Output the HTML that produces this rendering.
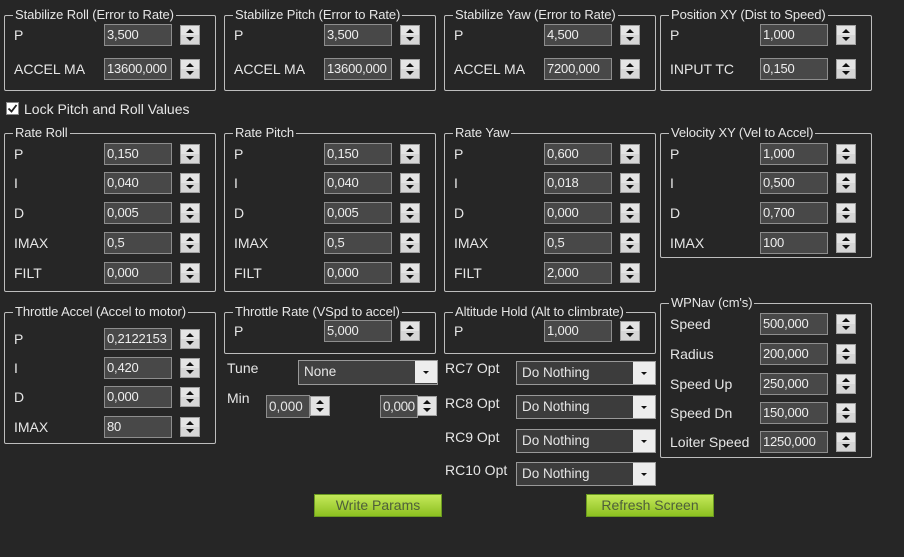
<!DOCTYPE html><html><head><meta charset="utf-8"><style>
*{box-sizing:border-box;margin:0;padding:0}
body{width:904px;height:557px;background:#262626;font-family:"Liberation Sans",sans-serif;font-size:13.5px;color:#e6e6e6;position:relative;overflow:hidden}
.g{position:absolute;border:1px solid #bdbdbd;border-radius:2px}
.g>.t{position:absolute;left:8px;top:-9px;background:#262626;padding:0 2px;font-size:13px;line-height:16px;white-space:nowrap;letter-spacing:-0.1px}
.r{position:absolute;left:0;width:100%;height:22px}
.r span{position:absolute;left:9px;top:3px;line-height:16px;font-size:14px}
.r i{position:absolute;left:99px;top:0;width:68px;height:22px;background:#484848;border:1px solid #8e8e8e;font-style:normal;line-height:20px;padding-left:2px;color:#eee;font-size:13px;letter-spacing:-0.2px;white-space:nowrap;overflow:hidden}
.r b,.sp{position:absolute;left:175px;top:1px;width:20px;height:20px;background:#e4e4e4;border:1px solid #a0a0a0}
.r b:before,.sp:before{content:"";position:absolute;left:5px;top:3px;border:4px solid transparent;border-bottom:4px solid #111;border-top:0}
.r b:after,.sp:after{content:"";position:absolute;left:5px;top:11px;border:4px solid transparent;border-top:4px solid #111;border-bottom:0}
.r b{box-shadow:inset 0 -9px 0 #d6d6d6}
.l{position:absolute;line-height:16px;font-size:14px}
.cb{position:absolute;width:110px;height:24px;background:#3c3c3c;border:1px solid #999;line-height:22px;padding-left:5px}
.cb:after{content:"";position:absolute;right:0;top:0;width:22px;height:22px;background:#ededed}
.cb:before{content:"";position:absolute;right:8px;top:10px;border:3px solid transparent;border-top:3px solid #111;z-index:2}
.btn{position:absolute;width:128px;height:23px;background:linear-gradient(#c4e85a,#8cc020);border:1px solid #6a9a20;color:#4f5f3a;text-align:center;line-height:21px;font-size:14px}
</style></head><body>

<div class="g" style="left:4px;top:15px;width:212px;height:76px"><div class="t">Stabilize Roll (Error to Rate)</div>
<div class="r" style="top:8px"><span>P</span><i>3,500</i><b></b></div>
<div class="r" style="top:42px"><span>ACCEL MA</span><i>13600,000</i><b></b></div></div>
<div class="g" style="left:224px;top:15px;width:212px;height:76px"><div class="t">Stabilize Pitch (Error to Rate)</div>
<div class="r" style="top:8px"><span>P</span><i>3,500</i><b></b></div>
<div class="r" style="top:42px"><span>ACCEL MA</span><i>13600,000</i><b></b></div></div>
<div class="g" style="left:444px;top:15px;width:212px;height:76px"><div class="t">Stabilize Yaw (Error to Rate)</div>
<div class="r" style="top:8px"><span>P</span><i>4,500</i><b></b></div>
<div class="r" style="top:42px"><span>ACCEL MA</span><i>7200,000</i><b></b></div></div>
<div class="g" style="left:660px;top:15px;width:212px;height:76px"><div class="t">Position XY (Dist to Speed)</div>
<div class="r" style="top:8px"><span>P</span><i>1,000</i><b></b></div>
<div class="r" style="top:42px"><span>INPUT TC</span><i>0,150</i><b></b></div></div>

<div style="position:absolute;left:6px;top:102px;width:13px;height:13px;background:#fff;border:1px solid #888"><svg width="11" height="11" style="position:absolute;left:0;top:0"><path d="M1.5 5.5 L4.5 8.5 L9.5 2" stroke="#222" stroke-width="1.8" fill="none"/></svg></div>
<div class="l" style="left:24px;top:101px">Lock Pitch and Roll Values</div>

<div class="g" style="left:4px;top:133px;width:212px;height:159px"><div class="t">Rate Roll</div>
<div class="r" style="top:9px"><span>P</span><i>0,150</i><b></b></div>
<div class="r" style="top:38px"><span>I</span><i>0,040</i><b></b></div>
<div class="r" style="top:68px"><span>D</span><i>0,005</i><b></b></div>
<div class="r" style="top:98px"><span>IMAX</span><i>0,5</i><b></b></div>
<div class="r" style="top:128px"><span>FILT</span><i>0,000</i><b></b></div></div>
<div class="g" style="left:224px;top:133px;width:212px;height:159px"><div class="t">Rate Pitch</div>
<div class="r" style="top:9px"><span>P</span><i>0,150</i><b></b></div>
<div class="r" style="top:38px"><span>I</span><i>0,040</i><b></b></div>
<div class="r" style="top:68px"><span>D</span><i>0,005</i><b></b></div>
<div class="r" style="top:98px"><span>IMAX</span><i>0,5</i><b></b></div>
<div class="r" style="top:128px"><span>FILT</span><i>0,000</i><b></b></div></div>
<div class="g" style="left:444px;top:133px;width:212px;height:159px"><div class="t">Rate Yaw</div>
<div class="r" style="top:9px"><span>P</span><i>0,600</i><b></b></div>
<div class="r" style="top:38px"><span>I</span><i>0,018</i><b></b></div>
<div class="r" style="top:68px"><span>D</span><i>0,000</i><b></b></div>
<div class="r" style="top:98px"><span>IMAX</span><i>0,5</i><b></b></div>
<div class="r" style="top:128px"><span>FILT</span><i>2,000</i><b></b></div></div>
<div class="g" style="left:660px;top:133px;width:212px;height:125px"><div class="t">Velocity XY (Vel to Accel)</div>
<div class="r" style="top:9px"><span>P</span><i>1,000</i><b></b></div>
<div class="r" style="top:38px"><span>I</span><i>0,500</i><b></b></div>
<div class="r" style="top:68px"><span>D</span><i>0,700</i><b></b></div>
<div class="r" style="top:98px"><span>IMAX</span><i>100</i><b></b></div></div>

<div class="g" style="left:4px;top:312px;width:212px;height:132px"><div class="t">Throttle Accel (Accel to motor)</div>
<div class="r" style="top:15px"><span>P</span><i>0,2122153</i><b></b></div>
<div class="r" style="top:44px"><span>I</span><i>0,420</i><b></b></div>
<div class="r" style="top:73px"><span>D</span><i>0,000</i><b></b></div>
<div class="r" style="top:103px"><span>IMAX</span><i>80</i><b></b></div></div>
<div class="g" style="left:224px;top:312px;width:212px;height:42px"><div class="t">Throttle Rate (VSpd to accel)</div>
<div class="r" style="top:7px"><span>P</span><i>5,000</i><b></b></div></div>
<div class="g" style="left:444px;top:312px;width:212px;height:42px"><div class="t">Altitude Hold (Alt to climbrate)</div>
<div class="r" style="top:7px"><span>P</span><i>1,000</i><b></b></div></div>
<div class="g" style="left:660px;top:303px;width:212px;height:155px"><div class="t">WPNav (cm's)</div>
<div class="r" style="top:9px"><span>Speed</span><i>500,000</i><b></b></div>
<div class="r" style="top:39px"><span>Radius</span><i>200,000</i><b></b></div>
<div class="r" style="top:69px"><span>Speed Up</span><i>250,000</i><b></b></div>
<div class="r" style="top:98px"><span>Speed Dn</span><i>150,000</i><b></b></div>
<div class="r" style="top:127px"><span>Loiter Speed</span><i>1250,000</i><b></b></div></div>

<div class="l" style="left:227px;top:360px">Tune</div>
<div class="cb" style="left:298px;top:360px;width:140px;height:25px;background:#404040">None</div>
<div class="l" style="left:227px;top:390px">Min</div>
<div style="position:absolute;left:266px;top:395px;width:44px;height:23px;background:#484848;border:1px solid #8e8e8e;line-height:21px;padding-left:2px">0,000</div>
<div class="sp" style="left:310px;top:396px"></div>
<div style="position:absolute;left:380px;top:395px;width:38px;height:23px;background:#484848;border:1px solid #8e8e8e;line-height:21px;padding-left:2px;letter-spacing:-0.4px">0,000</div>
<div class="sp" style="left:417px;top:396px"></div>

<div class="l" style="left:445px;top:360px">RC7 Opt</div>
<div class="cb" style="left:516px;top:361px;width:140px">Do Nothing</div>
<div class="l" style="left:445px;top:395px">RC8 Opt</div>
<div class="cb" style="left:516px;top:395px;width:140px">Do Nothing</div>
<div class="l" style="left:445px;top:429px">RC9 Opt</div>
<div class="cb" style="left:516px;top:429px;width:140px">Do Nothing</div>
<div class="l" style="left:445px;top:462px">RC10 Opt</div>
<div class="cb" style="left:516px;top:462px;width:140px">Do Nothing</div>

<div class="btn" style="left:314px;top:494px">Write Params</div>
<div class="btn" style="left:586px;top:494px">Refresh Screen</div>
</body></html>
